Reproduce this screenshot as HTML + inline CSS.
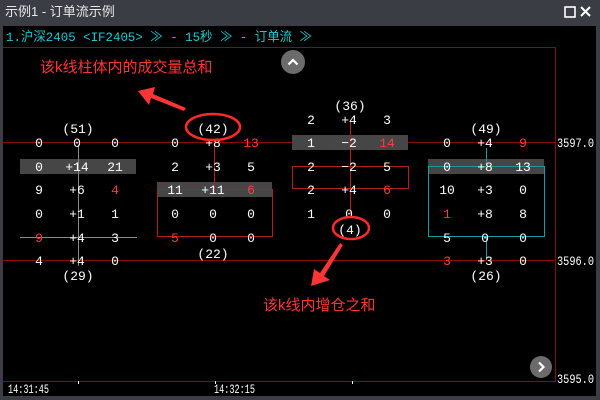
<!DOCTYPE html>
<html><head><meta charset="utf-8"><style>
html,body{margin:0;padding:0;width:600px;height:400px;overflow:hidden;background:#3a3d44}
svg{display:block}
.m{font-family:"Liberation Mono","DejaVu Sans Mono",monospace;font-size:13px}
.c{font-family:"Liberation Sans","Noto Sans CJK SC",sans-serif}
</style></head><body>
<svg width="600" height="400" xmlns="http://www.w3.org/2000/svg">
<rect x="0" y="0" width="600" height="400" fill="#3a3d44"/>
<text x="5" y="16" class="c" font-size="13" fill="#e8e8e8">示例1 - 订单流示例</text>
<rect x="565" y="7" width="10" height="10" fill="none" stroke="#fff" stroke-width="1.6"/>
<path d="M581 7 L590 16 M590 7 L581 16" stroke="#fff" stroke-width="2"/>
<rect x="3" y="26" width="593" height="370" fill="#000"/>
<text x="6" y="41" class="m" fill="#1ec8d0" font-size="13" textLength="306" lengthAdjust="spacingAndGlyphs" style="font-family:'Liberation Mono','Noto Sans CJK SC',monospace">1.沪深2405 &lt;IF2405&gt; ≫ - 15秒 ≫  - 订单流 ≫</text>
<g stroke="#8b0a0a" stroke-width="1" fill="none">
<path d="M3 47.5 H555.5 V381.5 H3"/>
<path d="M3 142.5 H555 M3 260.5 H555"/>
</g>
<g stroke="#fff"><path d="M78.5 381 v3 M215.5 381 v3 M352.5 381 v3"/></g>
<g class="m" fill="#fff" font-size="12">
<text x="557" y="147" textLength="37" lengthAdjust="spacingAndGlyphs">3597.0</text><text x="557" y="265" textLength="37" lengthAdjust="spacingAndGlyphs">3596.0</text><text x="557" y="383" textLength="37" lengthAdjust="spacingAndGlyphs">3595.0</text>
<text x="8" y="393" textLength="41" lengthAdjust="spacingAndGlyphs">14:31:45</text><text x="214" y="393" textLength="41" lengthAdjust="spacingAndGlyphs">14:32:15</text>
</g>
<g fill="#464646">
<rect x="20" y="159" width="116" height="15"/>
<rect x="157" y="182" width="115" height="15"/>
<rect x="292" y="135" width="116" height="15"/>
<rect x="428" y="159" width="116" height="15"/>
</g>
<g fill="none" stroke-width="1">
<path d="M78.5 145 V266 M20 237.5 H137" stroke="#8a8a8a"/>
<path d="M214.5 145 V190" stroke="#b02020"/>
<rect x="157.5" y="189.5" width="115" height="47" stroke="#b02020"/>
<path d="M350.5 122 V214" stroke="#b02020"/>
<rect x="292.5" y="166.5" width="116" height="22" stroke="#b02020"/>
<path d="M486.5 148 V166 M486.5 237 V260" stroke="#1a9a9a"/>
<rect x="428.5" y="166.5" width="116" height="70" stroke="#1a9a9a"/>
</g>
<g class="m" fill="#fff" text-anchor="middle" font-size="14">
<text x="78" y="133">(51)</text>
<text x="39" y="147">0</text><text x="77" y="147">0</text><text x="115" y="147">0</text>
<text x="39" y="171">0</text><text x="77" y="171">+14</text><text x="115" y="171">21</text>
<text x="39" y="194">9</text><text x="77" y="194">+6</text><text x="115" y="194" fill="#ff3b3b">4</text>
<text x="39" y="218">0</text><text x="77" y="218">+1</text><text x="115" y="218">1</text>
<text x="39" y="242" fill="#ff3b3b">9</text><text x="77" y="242">+4</text><text x="115" y="242">3</text>
<text x="39" y="265">4</text><text x="77" y="265">+4</text><text x="115" y="265">0</text>
<text x="78" y="280">(29)</text>

<text x="213" y="133">(42)</text>
<text x="175" y="147">0</text><text x="213" y="147">+8</text><text x="251" y="147" fill="#ff3b3b">13</text>
<text x="175" y="171">2</text><text x="213" y="171">+3</text><text x="251" y="171">5</text>
<text x="175" y="194">11</text><text x="213" y="194">+11</text><text x="251" y="194" fill="#ff3b3b">6</text>
<text x="175" y="218">0</text><text x="213" y="218">0</text><text x="251" y="218">0</text>
<text x="175" y="242" fill="#ff3b3b">5</text><text x="213" y="242">0</text><text x="251" y="242">0</text>
<text x="213" y="258">(22)</text>

<text x="350" y="110">(36)</text>
<text x="311" y="124">2</text><text x="349" y="124">+4</text><text x="387" y="124">3</text>
<text x="311" y="147">1</text><text x="349" y="147">−2</text><text x="387" y="147" fill="#ff3b3b">14</text>
<text x="311" y="171">2</text><text x="349" y="171">−2</text><text x="387" y="171">5</text>
<text x="311" y="194">2</text><text x="349" y="194">+4</text><text x="387" y="194" fill="#ff3b3b">6</text>
<text x="311" y="218">1</text><text x="349" y="218">0</text><text x="387" y="218">0</text>
<text x="350" y="234">(4)</text>

<text x="486" y="133">(49)</text>
<text x="447" y="147">0</text><text x="485" y="147">+4</text><text x="523" y="147" fill="#ff3b3b">9</text>
<text x="447" y="171">0</text><text x="485" y="171">+8</text><text x="523" y="171">13</text>
<text x="447" y="194">10</text><text x="485" y="194">+3</text><text x="523" y="194">0</text>
<text x="447" y="218" fill="#ff3b3b">1</text><text x="485" y="218">+8</text><text x="523" y="218">8</text>
<text x="447" y="242">5</text><text x="485" y="242">0</text><text x="523" y="242">0</text>
<text x="447" y="265" fill="#ff3b3b">3</text><text x="485" y="265">+3</text><text x="523" y="265">0</text>
<text x="486" y="280">(26)</text>
</g>
<g fill="none" stroke="#ff2a2a" stroke-width="2.5">
<ellipse cx="213" cy="127" rx="27" ry="13"/>
<ellipse cx="351" cy="228" rx="18" ry="11"/>
</g>
<g fill="#ff3535">
<polygon points="138,91 155,87 153,94 186,108 184,111 151,98 149,105"/>
<polygon points="311,286 314,269 320,273 340,243 343,245 324,276 330,280"/>
</g>
<text x="40" y="72" class="c" font-size="15" fill="#ff3535">该k线柱体内的成交量总和</text>
<text x="263" y="310" class="c" font-size="15" fill="#ff3535">该k线内增仓之和</text>
<circle cx="293" cy="62" r="12" fill="#6b6b6b"/>
<path d="M288.5 64.5 L293 60 L297.5 64.5" stroke="#fff" stroke-width="2.2" fill="none"/>
<circle cx="541" cy="367" r="11" fill="#6b6b6b"/>
<path d="M539 362.5 L543.5 367 L539 371.5" stroke="#fff" stroke-width="2.2" fill="none"/>
</svg>
</body></html>
